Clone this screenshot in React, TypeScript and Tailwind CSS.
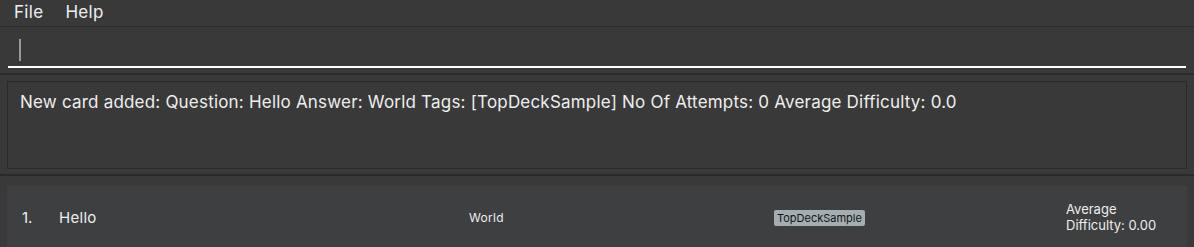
export default function App() {
  const font = { fontFamily: 'Inter, "Liberation Sans", Arial, sans-serif' };
  return (
    <div className="w-[1194px] h-[247px] overflow-hidden bg-[#393939] text-[#eeeeee]" style={font}>
      <div className="h-[27px] flex items-center gap-[22px] pl-[14px] text-[17px] tracking-[0.3px] border-b border-[#2c2c2c]">
        <span>File</span>
        <span>Help</span>
      </div>
      <div className="h-[46px] px-[8px] pt-[12px]">
        <div className="h-[29px] pl-[11px] border-b-2 border-white">
          <div className="w-[2px] h-[22px] bg-[#9a9a9a]"></div>
        </div>
      </div>
      <div className="h-[2px] bg-[#2a2a2a]"></div>
      <div className="h-[99px] pt-[6px] px-[7px]">
        <div className="h-[88px] border border-[#2a2a2a] pl-[12px] pt-[8px] text-[17px] tracking-[0.2px] whitespace-nowrap">
          New card added: Question: Hello Answer: World Tags: [TopDeckSample] No Of Attempts: 0 Average Difficulty: 0.0
        </div>
      </div>
      <div className="h-[2px] bg-[#2a2a2a]"></div>
      <div className="pt-[10px] px-[7px]">
        <div className="h-[70px] bg-[#3d3f41] flex items-start pt-[17px] relative">
          <div className="flex items-center h-[30px]">
            <span className="ml-[15px] w-[37px] text-[15px]">1.</span>
            <span className="text-[15px] tracking-[0.3px]">Hello</span>
          </div>
          <div className="absolute left-[462px] top-[17px] h-[30px] flex items-center text-[12px] tracking-[0.3px]">World</div>
          <div className="absolute left-[767px] top-[17px] h-[30px] flex items-center">
            <span className="bg-[#a3adb2] text-[#141414] text-[11px] px-[3px] h-[16px] leading-[16px] rounded-[2px]">TopDeckSample</span>
          </div>
          <div className="absolute left-[1059px] top-[15px] text-[13px] leading-[16px]">
            Average<br />Difficulty: 0.00
          </div>
        </div>
      </div>
    </div>
  );
}
